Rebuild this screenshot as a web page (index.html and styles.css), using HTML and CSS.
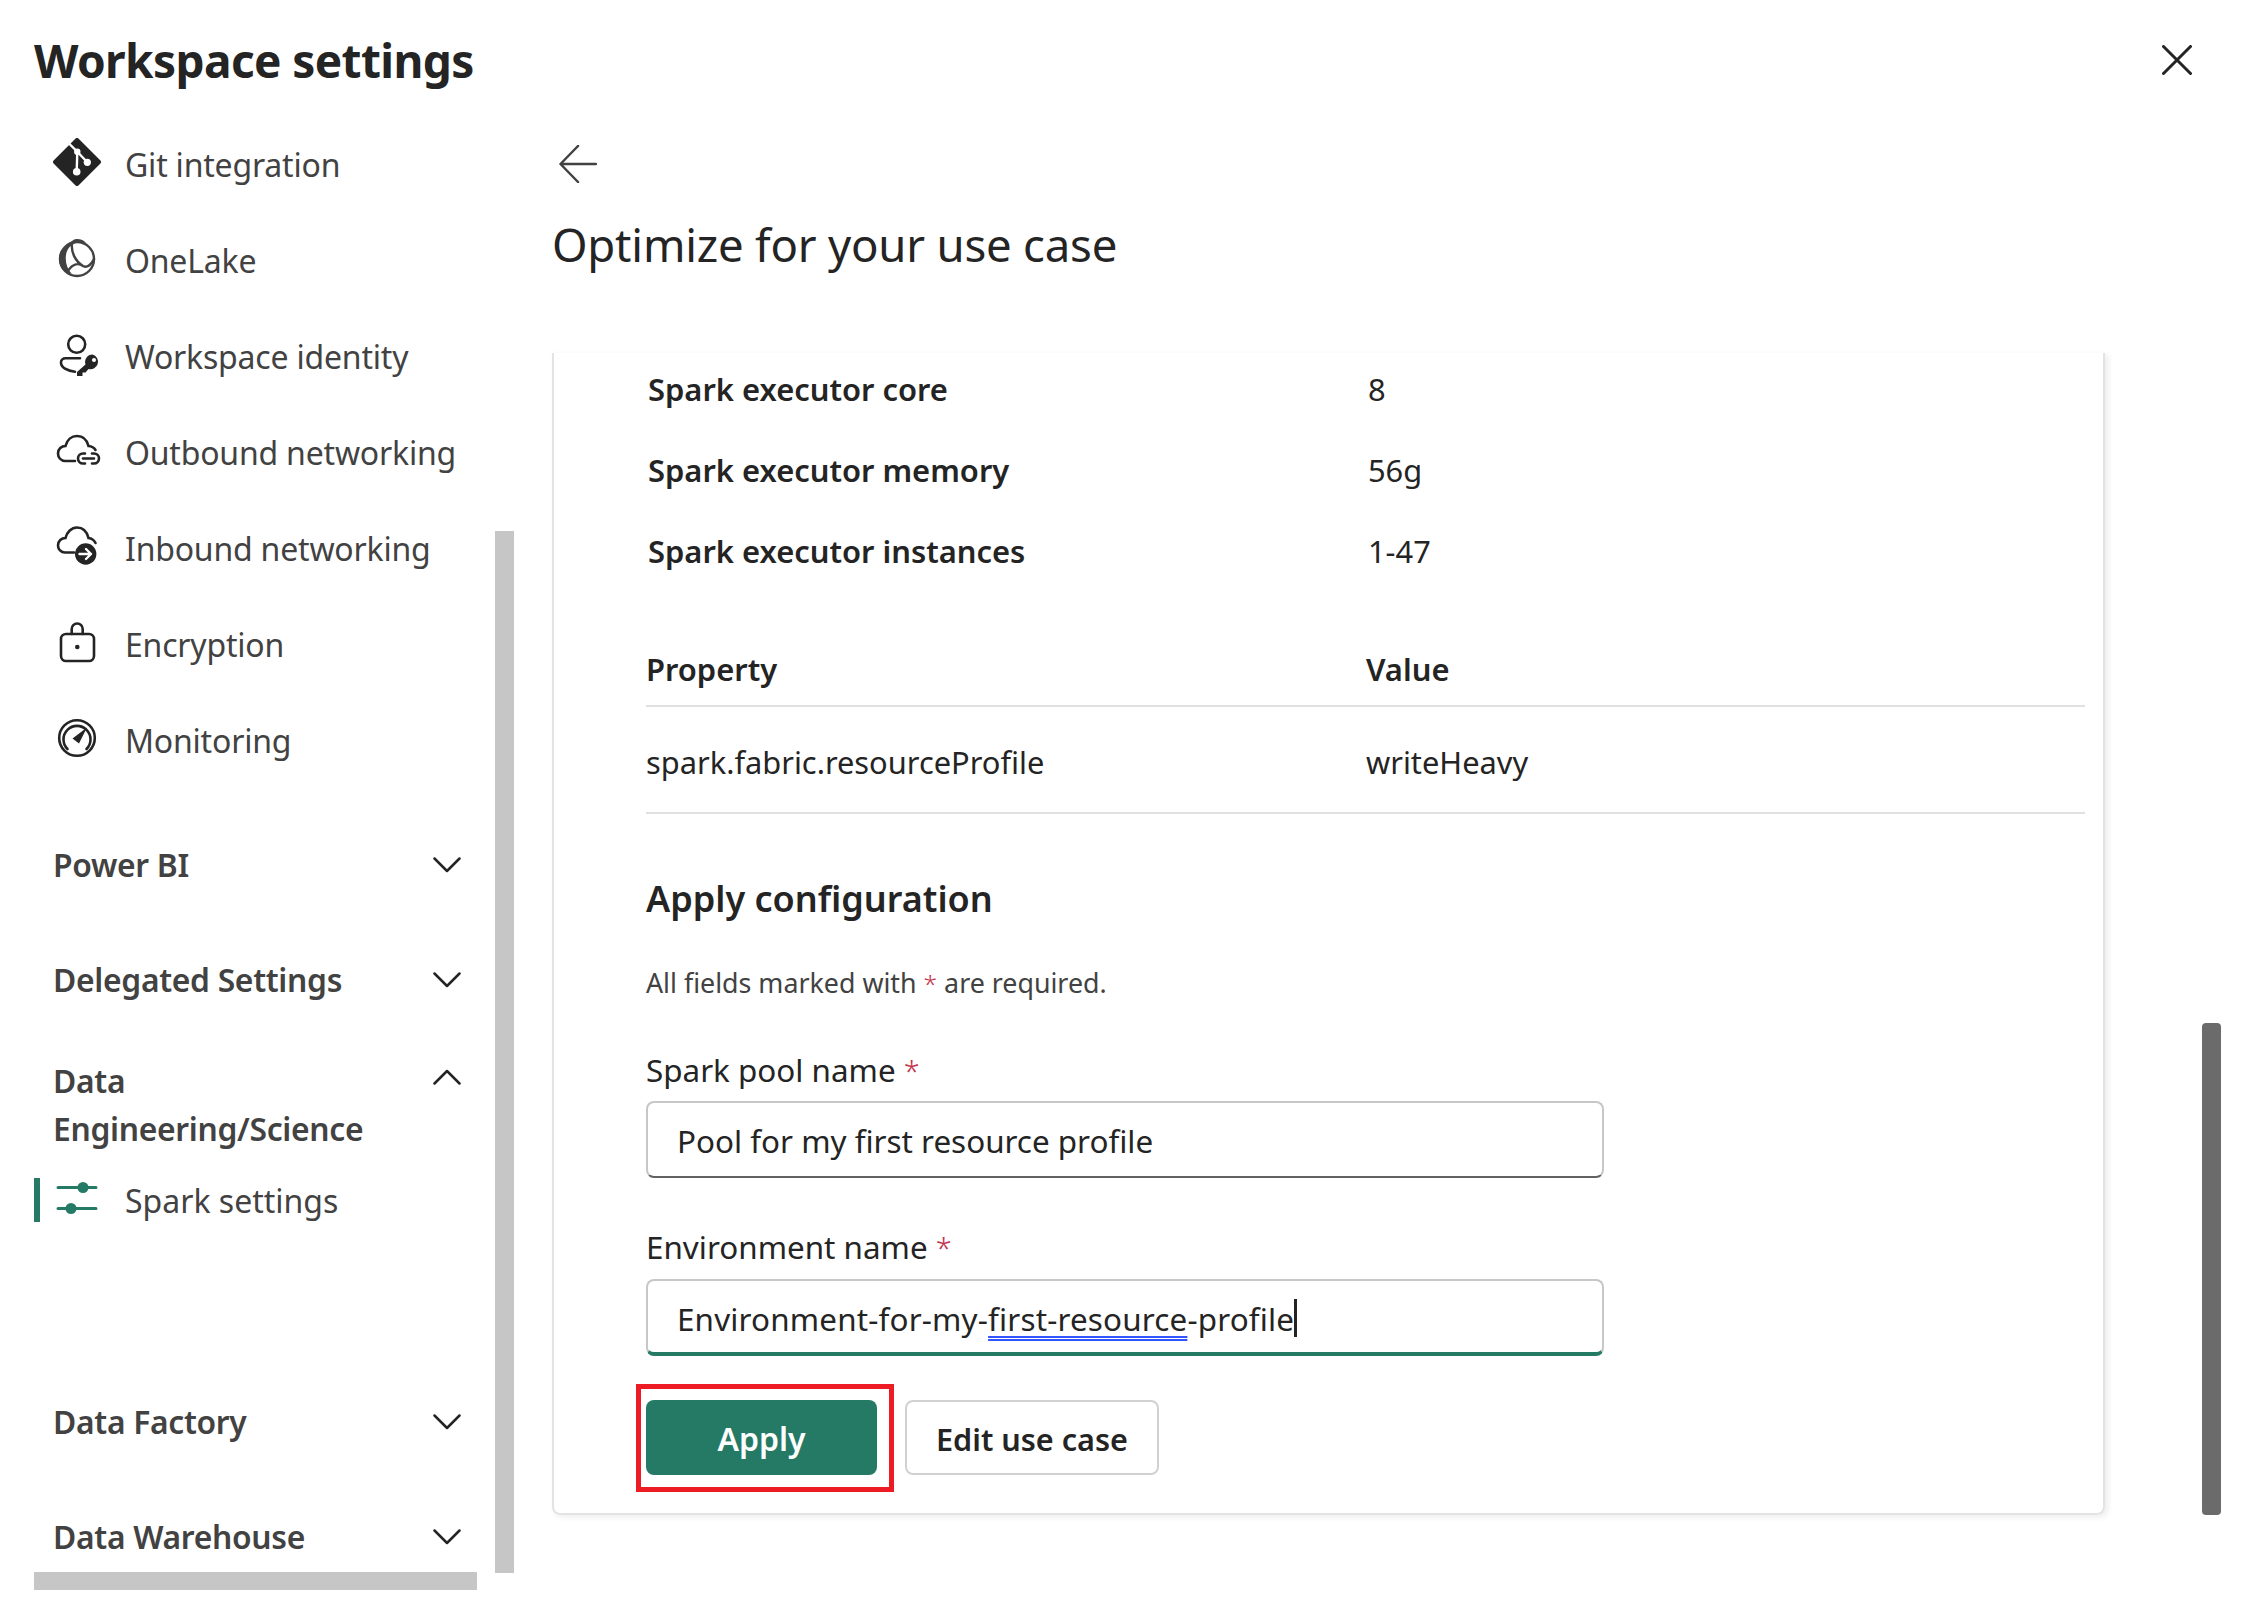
FILE: index.html
```html
<!DOCTYPE html>
<html>
<head>
    <title>Workspace settings</title>
    <link rel="stylesheet" href="styles.css">
</head>
<body>
    <div class="page">
        <header class="top-bar">
            <h1>Workspace settings</h1>
            <svg class="close-icon" width="30" height="30" viewBox="0 0 30 30"><path d="M1.5 1.5 28.5 28.5M28.5 1.5 1.5 28.5"/></svg>
        </header>

        <div class="content">
            <nav class="sidebar">
                <a class="nav-item">
                    <svg class="icon raised" viewBox="0 0 48 48">
                        <path class="git-body" d="M24 2 46 24 24 46 2 24Z"/>
                        <path class="git-branch" d="M16 5.5 24.3 13.7 23.7 33.7M24.3 13.7 34.3 24.3"/>
                        <circle class="git-node" cx="24.3" cy="13.7" r="3.2"/>
                        <circle class="git-node" cx="34.3" cy="24.3" r="3.6"/>
                        <circle class="git-node" cx="23.7" cy="33.7" r="3.8"/>
                    </svg>
                    <span>Git integration</span>
                </a>
                <a class="nav-item">
                    <svg class="icon raised" viewBox="0 0 48 48">
                        <path class="fill-soft" d="M24 5C28 5 31 6.500 33 9 24 6.500 14.500 11 13 21 12 28 14 35 19 40 10 38 5.500 31 6 24 6.500 17 11 12.500 16 10.500 18 7 21 5 24 5Z"/>
                        <circle class="stroke-soft" cx="24" cy="25" r="17"/>
                        <path class="stroke-soft" d="M19 10C18 18 22 27 30 32M15 37C20 29 26 29 30 32 34 34 38 31 41 25"/>
                    </svg>
                    <span>OneLake</span>
                </a>
                <a class="nav-item">
                    <svg class="icon" viewBox="0 0 48 48">
                        <circle class="stroke-dark" cx="23.700" cy="12.300" r="8.500"/>
                        <path class="stroke-dark" d="M27 26.300H12.500C10 26.300 8 28 8 30.500 8 35.500 14 39 22 39.700"/>
                        <path class="fill-dark" d="M39.500 22.500A7.500 7.500 0 0 0 32.500 32.500L24 40V44H29.500V40.500H32.500L35.500 37A7.500 7.500 0 1 0 39.500 22.500Z"/>
                        <circle class="knock-out" cx="41" cy="28" r="2"/>
                    </svg>
                    <span>Workspace identity</span>
                </a>
                <a class="nav-item">
                    <svg class="icon" viewBox="0 0 48 48">
                        <path class="stroke-dark" d="M22 33H12C8 33 5 29.500 5 25.500 5 21 8.500 18 12.500 18 14 12 18.500 8 24 8 30 8 34 12 35.500 18 38.500 18.300 41 19.500 42.500 22"/>
                        <path class="stroke-dark" d="M32 25.500H30A5 5 0 0 0 30 35.500H32M39 25.500H41A5 5 0 0 1 41 35.500H39M30 30.500H41"/>
                    </svg>
                    <span>Outbound networking</span>
                </a>
                <a class="nav-item">
                    <svg class="icon" viewBox="0 0 48 48">
                        <path class="stroke-dark" d="M21 28.500H12C8 28.500 5 25 5 21.500 5 17 8.500 14 12.500 14 14 8 18.500 3.500 24 3.500 30 3.500 34 8 35.500 14 38.500 14.300 41 16 42.500 19"/>
                        <circle class="fill-dark" cx="32.700" cy="30" r="10.700"/>
                        <path class="arrow-white" d="M26.500 30H38M33 25 38 30 33 35"/>
                    </svg>
                    <span>Inbound networking</span>
                </a>
                <a class="nav-item">
                    <svg class="icon" viewBox="0 0 48 48">
                        <rect class="stroke-dark" x="8" y="14" width="33" height="27" rx="5"/>
                        <path class="stroke-dark" d="M18.700 14V9A5.500 5.500 0 0 1 29.700 9V14"/>
                        <circle class="fill-dark" cx="24.300" cy="27" r="2.300"/>
                    </svg>
                    <span>Encryption</span>
                </a>
                <a class="nav-item">
                    <svg class="icon" viewBox="0 0 48 48">
                        <circle class="stroke-dark" cx="24" cy="22" r="17.800"/>
                        <path class="stroke-dark" d="M14.500 33A13.500 13.500 0 1 1 33.500 33"/>
                        <path class="fill-dark" d="M34 11.500 26 27.500 19.500 22.500Z"/>
                    </svg>
                    <span>Monitoring</span>
                </a>

                <div class="nav-section">
                    <span>Power BI</span>
                    <svg class="chevron" viewBox="0 0 28 16"><path d="M1.500 1.500 14 14 26.500 1.500"/></svg>
                </div>
                <div class="nav-section">
                    <span>Delegated Settings</span>
                    <svg class="chevron" viewBox="0 0 28 16"><path d="M1.500 1.500 14 14 26.500 1.500"/></svg>
                </div>
                <div class="nav-section open">
                    <span>Data<br>Engineering/Science</span>
                    <svg class="chevron" viewBox="0 0 28 16"><path d="M1.500 14.500 14 2 26.500 14.500"/></svg>
                </div>
                <a class="nav-item active">
                    <svg class="icon raised" viewBox="0 0 48 48">
                        <path class="slider-line" d="M5 13.500H43M5 34.500H43"/>
                        <circle class="slider-knob" cx="30" cy="13.500" r="5.500"/>
                        <circle class="slider-knob" cx="18" cy="34.500" r="5.500"/>
                    </svg>
                    <span>Spark settings</span>
                </a>
                <div class="nav-section after-gap">
                    <span>Data Factory</span>
                    <svg class="chevron" viewBox="0 0 28 16"><path d="M1.500 1.500 14 14 26.500 1.500"/></svg>
                </div>
                <div class="nav-section">
                    <span>Data Warehouse</span>
                    <svg class="chevron" viewBox="0 0 28 16"><path d="M1.500 1.500 14 14 26.500 1.500"/></svg>
                </div>

                <div class="scroll-v"></div>
                <div class="scroll-h"></div>
            </nav>

            <main class="main">
                <svg class="back-icon" width="38" height="38" viewBox="0 0 38 38"><path d="M37 19H2M19 1 1.500 19 19 37"/></svg>
                <h2>Optimize for your use case</h2>

                <section class="card">
                    <div class="spec-rows">
                        <div class="spec-row"><b>Spark executor core</b><span>8</span></div>
                        <div class="spec-row"><b>Spark executor memory</b><span>56g</span></div>
                        <div class="spec-row"><b>Spark executor instances</b><span>1-47</span></div>
                    </div>

                    <div class="prop-head"><b>Property</b><b>Value</b></div>
                    <div class="prop-row"><span>spark.fabric.resourceProfile</span><span>writeHeavy</span></div>

                    <h3>Apply configuration</h3>
                    <p class="note">All fields marked with <span class="req">*</span> are required.</p>

                    <label class="field-label first">Spark pool name <span class="req">*</span></label>
                    <div class="text-input">Pool for my first resource profile</div>

                    <label class="field-label">Environment name <span class="req">*</span></label>
                    <div class="text-input focused">Environment-for-my-<span class="spell">first-resource</span>-profile<span class="caret"></span></div>

                    <div class="actions">
                        <div class="apply-wrap">
                            <button class="btn primary">Apply</button>
                            <div class="callout"></div>
                        </div>
                        <button class="btn">Edit use case</button>
                    </div>
                </section>
            </main>
        </div>

        <div class="page-scroll"></div>
    </div>
</body>
</html>
```

FILE: styles.css
```css
* {
    box-sizing: border-box;
}

body {
    margin: 0;
    background: #fff;
    color: #242424;
    font-family: "Noto Sans", "Open Sans", sans-serif;
}

.page {
    position: relative;
    width: 2247px;
    height: 1614px;
    overflow: hidden;
}

.top-bar {
    display: flex;
    align-items: center;
    justify-content: space-between;
    height: 116px;
    padding: 4px 55px 0 34px;
}

h1 {
    margin: 0;
    font-size: 46px;
    font-weight: 700;
    letter-spacing: -0.6px;
}

.close-icon path {
    fill: none;
    stroke: #242424;
    stroke-width: 3;
    stroke-linecap: round;
}

.content {
    display: flex;
}

/* left navigation */
.sidebar {
    position: relative;
    width: 552px;
    height: 1498px;
    padding-left: 34px;
    flex-shrink: 0;
}

.nav-item {
    display: flex;
    align-items: center;
    height: 96px;
    padding-left: 19px;
    color: #424242;
    font-size: 32px;
    letter-spacing: -0.2px;
}

.nav-item .icon {
    width: 48px;
    height: 48px;
    margin-right: 24px;
    flex-shrink: 0;
}

.nav-item .icon.raised {
    margin-top: -4px;
}

.nav-item.active {
    height: 44px;
    margin-top: 1px;
    border-left: 6px solid #257a66;
    padding-left: 13px;
    letter-spacing: 0;
}

.nav-section {
    display: flex;
    justify-content: space-between;
    align-items: flex-start;
    width: 427px;
    padding: 34px 0 33px 19px;
    color: #424242;
    font-size: 31.8px;
    font-weight: 600;
    line-height: 48px;
    letter-spacing: -0.3px;
}

.nav-section:nth-of-type(1) {
    margin-top: 19px;
}

.nav-section.open {
    padding: 20px 0 24px 19px;
}

.nav-section.after-gap {
    margin-top: 142px;
}

.chevron {
    width: 28px;
    height: 16px;
    margin-top: 16px;
    flex-shrink: 0;
}

.open .chevron {
    margin-top: 12px;
}

.chevron path {
    fill: none;
    stroke: #242424;
    stroke-width: 2.5;
    stroke-linecap: round;
    stroke-linejoin: round;
}

/* icon strokes */
.stroke-dark,
.stroke-soft {
    fill: none;
    stroke: #242424;
    stroke-width: 2.6;
    stroke-linecap: round;
}

.stroke-soft {
    stroke: #424242;
    stroke-width: 2.4;
}

.fill-dark {
    fill: #242424;
}

.fill-soft {
    fill: #424242;
}

.knock-out {
    fill: #fff;
}

.arrow-white {
    fill: none;
    stroke: #fff;
    stroke-width: 2.4;
    stroke-linecap: round;
    stroke-linejoin: round;
}

.git-body {
    fill: #242424;
    stroke: #242424;
    stroke-width: 4;
    stroke-linejoin: round;
}

.git-branch {
    fill: none;
    stroke: #fff;
    stroke-width: 2.4;
}

.git-node {
    fill: #fff;
}

.slider-line {
    fill: none;
    stroke: #257a66;
    stroke-width: 3;
    stroke-linecap: round;
}

.slider-knob {
    fill: #257a66;
}

/* scrollbars sit on top of the panes */
.scroll-v {
    position: absolute;
    left: 495px;
    top: 415px;
    width: 19px;
    height: 1042px;
    background: #c6c6c6;
}

.scroll-h {
    position: absolute;
    left: 34px;
    top: 1456px;
    width: 443px;
    height: 18px;
    background: #c6c6c6;
}

.page-scroll {
    position: absolute;
    left: 2202px;
    top: 1023px;
    width: 19px;
    height: 492px;
    border-radius: 4px;
    background: #6b6b6b;
}

/* right pane */
.main {
    flex: 1;
    padding-right: 142px;
}

.back-icon {
    display: block;
    margin: 29px 0 0 7px;
}

.back-icon path {
    fill: none;
    stroke: #424242;
    stroke-width: 2.5;
    stroke-linecap: round;
    stroke-linejoin: round;
}

h2 {
    margin: 25px 0 0;
    height: 73px;
    font-size: 45.5px;
    font-weight: 400;
    line-height: 73px;
    letter-spacing: -0.2px;
}

.card {
    margin-top: 72px;
    height: 1162px;
    padding: 0 18px 40px 92px;
    border: 2px solid #e3e3e3;
    border-top: none;
    border-radius: 0 0 8px 8px;
    box-shadow: 3px 2px 6px rgba(0, 0, 0, 0.08);
    font-size: 30.8px;
}

.spec-rows {
    display: flex;
    flex-direction: column;
    gap: 7px;
}

.spec-row {
    display: grid;
    grid-template-columns: 720px 1fr;
    align-items: center;
    height: 74px;
    padding: 0 0 3px 2px;
}

b {
    font-size: 30.9px;
    font-weight: 600;
}

.prop-head,
.prop-row {
    display: grid;
    grid-template-columns: 720px 1fr;
}

.prop-head {
    align-items: center;
    height: 75px;
    margin-top: 43px;
    border-bottom: 2px solid #e0e0e0;
}

.prop-row {
    padding: 31px 0 26px;
    line-height: 48px;
    border-bottom: 2px solid #e0e0e0;
}

h3 {
    margin: 59px 0 0;
    font-size: 36px;
    font-weight: 600;
    line-height: 52px;
}

.note {
    margin: 38px 0 0;
    color: #424242;
    font-size: 26.8px;
    line-height: 40px;
}

.req {
    color: #c4314b;
    font-size: 0.92em;
    font-weight: 300;
}

.field-label {
    display: block;
    margin-top: 47px;
    font-size: 31.4px;
    line-height: 44px;
}

.field-label.first {
    margin-top: 44px;
}

.text-input {
    display: flex;
    align-items: center;
    width: 958px;
    height: 77px;
    margin-top: 9px;
    padding: 2px 0 0 29px;
    border: 2px solid #c7c7c7;
    border-bottom: 2px solid #616161;
    border-radius: 8px;
    font-size: 31.4px;
    white-space: pre;
}

.first + .text-input {
    margin-top: 8px;
}

.text-input.focused {
    padding-top: 3px;
    border-bottom: 4px solid #257a66;
    letter-spacing: 0.17px;
}

.spell {
    text-decoration: underline double #3355ff;
    text-decoration-thickness: 1.500px;
    text-underline-offset: 5px;
}

.caret {
    display: inline-block;
    width: 3px;
    height: 38px;
    background: #242424;
}

.actions {
    display: flex;
    gap: 28px;
    margin-top: 44px;
}

.apply-wrap {
    position: relative;
}

.btn {
    height: 75px;
    padding: 2px 29px 0;
    border: 2px solid #d1d1d1;
    border-radius: 8px;
    background: #fff;
    color: #242424;
    font-family: inherit;
    font-size: 30.6px;
    font-weight: 600;
}

.btn.primary {
    width: 231px;
    border: none;
    background: #257a66;
    color: #fff;
    font-size: 32px;
}

.callout {
    position: absolute;
    top: -16px;
    right: -17px;
    bottom: -17px;
    left: -10px;
    border: 5px solid #ed1c24;
}
```
